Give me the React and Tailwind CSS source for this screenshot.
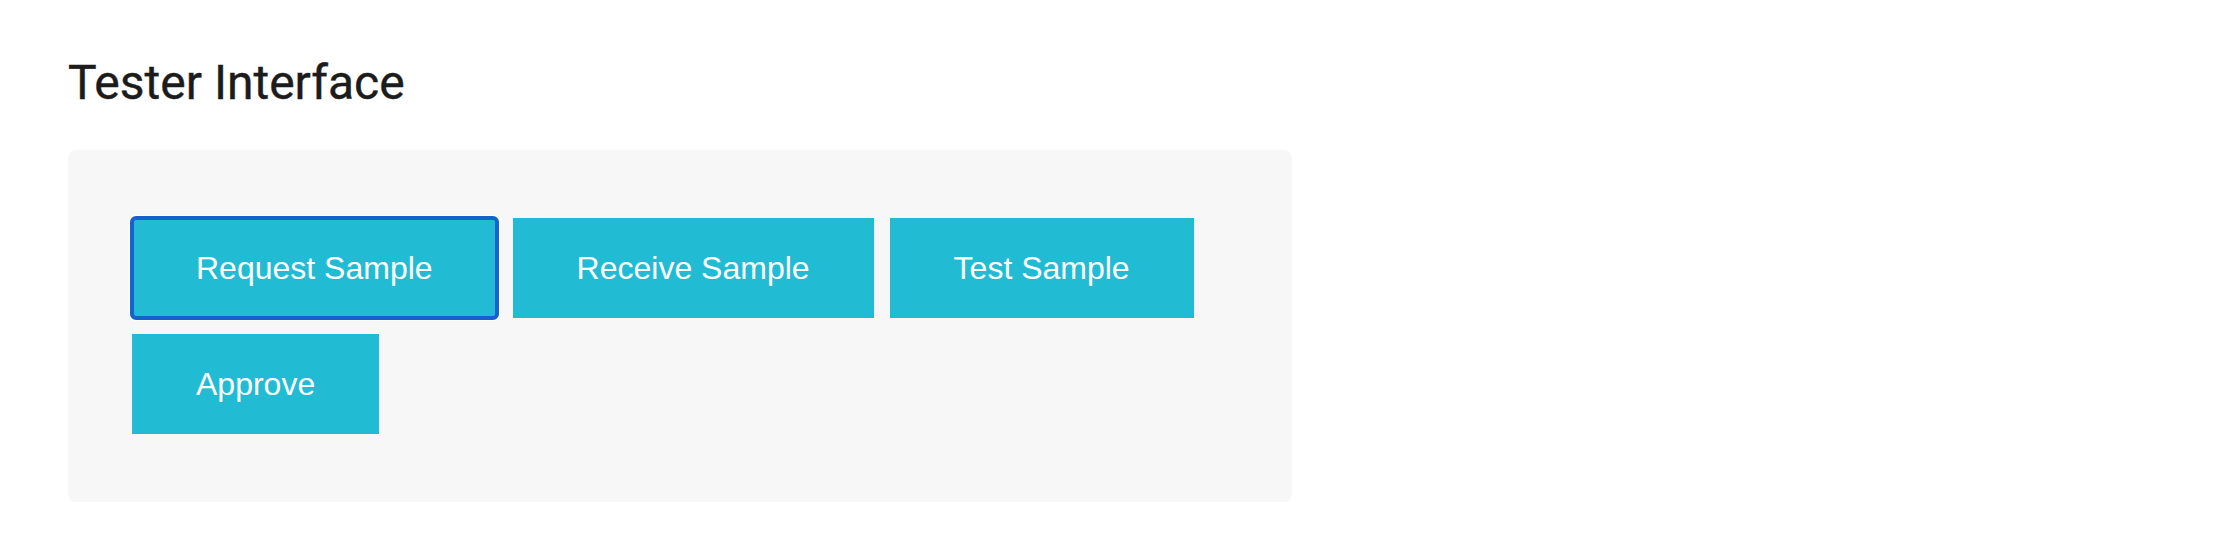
// Tester interface: workflow action buttons
const actions = ['Request Sample', 'Receive Sample', 'Test Sample', 'Approve'];

const ActionButton = ({ label, focused }) => (
  <button
    type="button"
    className="relative h-[100px] px-16 bg-[#21bcd4] text-white text-[32px] leading-9 font-['Liberation_Sans',Arial,sans-serif] cursor-pointer"
  >
    {focused && (
      <span className="absolute -inset-[2px] rounded-[6px] border-4 border-[#1463cc] shadow-[0_0_0_1px_#ffffff] pointer-events-none" />
    )}
    {label}
  </button>
);

export default function App() {
  return (
    <div className="min-h-[550px] bg-white px-[68px] pt-[55px]">
      <h1 className="text-[48px] leading-[56px] font-normal text-[#1c1c1c] font-['Roboto',sans-serif] [-webkit-text-stroke:0.4px_#1c1c1c]">
        Tester Interface
      </h1>

      <div className="mt-[39px] w-[1224px] rounded-lg bg-[#f7f7f7] px-16 py-[68px]">
        <div className="flex flex-wrap gap-4">
          {actions.map((label, i) => (
            <ActionButton key={label} label={label} focused={i === 0} />
          ))}
        </div>
      </div>
    </div>
  );
}
